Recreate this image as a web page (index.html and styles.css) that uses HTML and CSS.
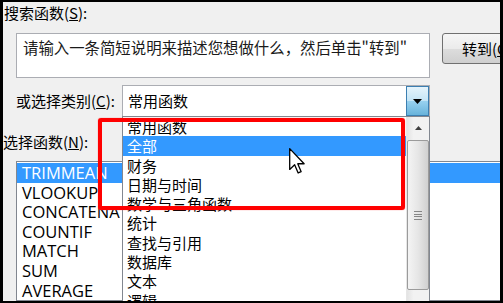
FILE: index.html
```html
<!DOCTYPE html>
<html lang="zh-CN">
<head>
    <meta charset="UTF-8">
    <title>插入函数</title>
    <link rel="stylesheet" href="styles.css">
</head>
<body>

    <div class="frame">
        <div class="dialog">
            <div class="label top-label">搜索函数(<u>S</u>):</div>

            <div class="search-row">
                <div class="search-box">请输入一条简短说明来描述您想做什么，然后单击"转到"</div>
                <button type="button" class="go-btn">转到(<u>G</u>)</button>
            </div>

            <div class="category-row">
                <div class="label cat-label">或选择类别(<u>C</u>):</div>
                <div class="combo">
                    <span class="combo-text">常用函数</span>
                    <span class="combo-arrow">
                        <svg width="9" height="5" viewBox="0 0 9 5"><path d="M0 0H9L4.5 5Z" fill="#000"/></svg>
                    </span>

                    <div class="popup">
                        <ul class="popup-list">
                            <li>常用函数</li>
                            <li class="selected">全部</li>
                            <li>财务</li>
                            <li>日期与时间</li>
                            <li>数学与三角函数</li>
                            <li>统计</li>
                            <li>查找与引用</li>
                            <li>数据库</li>
                            <li>文本</li>
                            <li>逻辑</li>
                        </ul>
                        <div class="scrollbar">
                            <div class="scroll-up">
                                <svg width="7" height="4" viewBox="0 0 7 4"><path d="M0 4H7L3.5 0Z" fill="#404040"/></svg>
                            </div>
                            <div class="scroll-thumb">
                                <span class="grip"></span>
                            </div>
                        </div>
                    </div>
                </div>
            </div>

            <div class="label fn-label">选择函数(<u>N</u>):</div>

            <ul class="fn-list">
                <li class="selected">TRIMMEAN</li>
                <li>VLOOKUP</li>
                <li>CONCATENATE</li>
                <li>COUNTIF</li>
                <li>MATCH</li>
                <li>SUM</li>
                <li>AVERAGE</li>
            </ul>
        </div>

        <!-- red annotation box and mouse pointer on top of the dialog -->
        <div class="callout"></div>
        <svg class="cursor" width="17" height="26" viewBox="0 0 13 20">
            <path d="M0.5 0.5V16.5L4.3 12.9L7 19.2L9.3 18.2L6.7 12.1H11.6Z" fill="#fff" stroke="#000" stroke-width="1" stroke-linejoin="round"/>
        </svg>
    </div>

</body>
</html>
```

FILE: styles.css
```css
body {
    margin: 0;
    padding: 0;
    background-color: #000;
    font-family: "Noto Sans CJK SC", sans-serif;
}

.frame {
    position: relative;
    width: 503px;
    height: 303px;
    box-sizing: border-box;
    border: solid #000;
    border-width: 2px 3px 2px 3px;
    background-color: #f0f0f0;
    overflow: hidden;
}

.dialog {
    font-size: 15px;
    color: #000;
}

.label {
    line-height: 20px;
    white-space: nowrap;
}

.top-label {
    margin-top: 1px;
    padding-left: 1px;
}

.search-row {
    display: flex;
    align-items: flex-start;
    gap: 12px;
    margin-top: 10px;
    padding-left: 13px;
}

.search-box {
    flex-shrink: 0;
    width: 414px;
    height: 45px;
    box-sizing: border-box;
    padding: 3px 6px;
    border: 1px solid #abadb3;
    background-color: #fff;
    line-height: 20px;
    font-size: 15.4px;
    white-space: nowrap;
    color: #1a1a1a;
}

.go-btn {
    flex-shrink: 0;
    width: 90px;
    height: 31px;
    padding: 0 0 0 19px;
    text-align: left;
    font-family: "Noto Sans CJK SC", sans-serif;
    font-size: 15px;
    color: #000;
    border: 1px solid #707070;
    border-radius: 3px;
    background: linear-gradient(#f6f6f6, #ebebeb 50%, #dddddd 51%, #cfcfcf);
}

.category-row {
    display: flex;
    align-items: center;
    margin-top: 7px;
    padding-left: 13px;
}

.cat-label {
    width: 106px;
}

.combo {
    position: relative;
    display: flex;
    width: 308px;
    height: 32px;
    box-sizing: border-box;
    border: 1px solid #abadb3;
    background-color: #fff;
}

.combo-text {
    flex: 1;
    padding-left: 5px;
    line-height: 30px;
}

.combo-arrow {
    display: flex;
    align-items: center;
    justify-content: center;
    width: 23px;
    box-sizing: border-box;
    border: 1px solid #3c7fb1;
    background: linear-gradient(#e5f4fc, #c4e5f6 50%, #98d1ef 51%, #68b3db);
}

.popup {
    position: absolute;
    z-index: 2;
    left: -1px;
    top: 30px;
    display: flex;
    width: 308px;
    height: 200px;
    box-sizing: border-box;
    border: 1px solid #828790;
    background-color: #fff;
}

.popup-list {
    flex: 1;
    margin: 0;
    padding: 0;
    list-style: none;
}

.popup-list li {
    height: 19.3px;
    line-height: 19.3px;
    padding-left: 4px;
    font-size: 15px;
    white-space: nowrap;
}

.selected {
    background-color: #3399ff;
    color: #fff;
}

.scrollbar {
    display: flex;
    flex-direction: column;
    width: 23px;
    background: linear-gradient(to right, #e3e3e3, #f2f2f2 30%, #f2f2f2);
    border-left: 1px solid #e6e6e6;
    box-sizing: border-box;
}

.scroll-up {
    display: flex;
    align-items: center;
    justify-content: center;
    height: 22px;
}

.scroll-thumb {
    display: flex;
    align-items: center;
    justify-content: center;
    height: 148px;
    margin: 1px 0 0 0;
    border: 1px solid #9b9b9b;
    border-radius: 2px;
    background: linear-gradient(to right, #f4f4f4, #e6e6e6 50%, #d0d0d0);
}

.grip {
    width: 8px;
    height: 9px;
    background: repeating-linear-gradient(#6e6e6e 0 1px, transparent 1px 2.5px);
    opacity: 0.8;
}

.fn-label {
    margin-top: 15px;
}

.fn-list {
    width: 500px;
    height: 140px;
    box-sizing: border-box;
    margin: 9px 0 0 13px;
    padding: 1px 0 0 0;
    list-style: none;
    border: 1px solid #828790;
    background-color: #fff;
}

.fn-list li {
    height: 19.6px;
    line-height: 19.6px;
    padding-left: 5px;
    font-family: "Open Sans", "Noto Sans CJK SC", sans-serif;
    font-size: 16.5px;
    white-space: nowrap;
}

.fn-list li.selected {
    background-color: #3399ff;
    color: #fff;
}

.callout {
    position: absolute;
    z-index: 3;
    left: 95px;
    top: 116px;
    width: 307px;
    height: 92px;
    box-sizing: border-box;
    border: 4.5px solid #ff0000;
    border-radius: 3px;
    box-shadow: 0 0 1px #ff3030;
}

.cursor {
    position: absolute;
    z-index: 4;
    left: 286px;
    top: 146px;
}
```
